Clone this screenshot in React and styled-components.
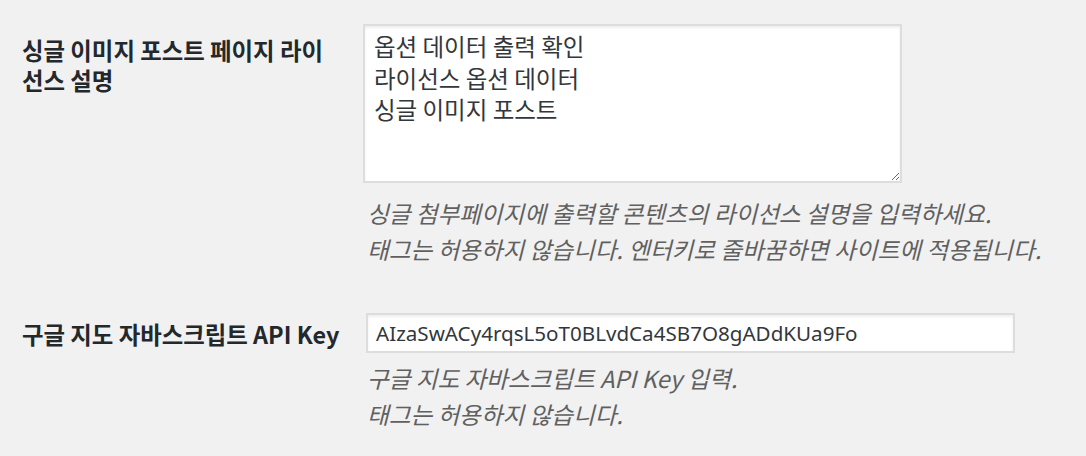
import React from "react";
import styled, { createGlobalStyle } from "styled-components";

const Global = createGlobalStyle`
  html, body { margin: 0; padding: 0; background: #f1f1f1; }
  body { font-family: "Noto Sans CJK KR", "Noto Sans", sans-serif; color: #23282d; }
  * { box-sizing: border-box; }
`;

const Page = styled.div`
  width: 1086px;
  height: 456px;
  padding: 24px 0 0 22px;
  background: #f1f1f1;
  overflow: hidden;
`;

const Row = styled.div`
  display: grid;
  grid-template-columns: 341px 1fr;
  margin-top: ${(p) => p.$gap || 0}px;
`;

const Label = styled.label`
  display: block;
  padding: ${(p) => p.$top}px 29px 0 0;
  font-family: "Noto Sans CJK KR", "Noto Sans", sans-serif;
  font-size: 23.4px;
  line-height: 30px;
  font-weight: 700;
  color: #23282d;
  white-space: ${(p) => (p.$nowrap ? "nowrap" : "normal")};
`;

const Field = styled.div`
  display: flex;
  flex-direction: column;
  align-items: flex-start;
`;

const TextArea = styled.textarea`
  display: block;
  width: 539px;
  height: 159px;
  margin: 0;
  padding: 5px 9px;
  border: 2px solid #dddddd;
  border-radius: 0;
  background: #fff;
  box-shadow: inset 0 2px 3px rgba(0, 0, 0, 0.07);
  font-family: "Noto Sans CJK KR", "Noto Sans", sans-serif;
  font-size: 23.5px;
  line-height: 31.5px;
  color: #32373c;
  outline: none;
`;

const TextInput = styled.input`
  display: block;
  width: 649px;
  height: 40px;
  margin: 0 0 0 3px;
  padding: 0 8px;
  border: 2px solid #dddddd;
  border-radius: 0;
  background: #fff;
  box-shadow: inset 0 2px 3px rgba(0, 0, 0, 0.07);
  font-family: "Noto Sans", "Noto Sans CJK KR", sans-serif;
  font-size: 20.6px;
  color: #32373c;
  outline: none;
`;

const Description = styled.p`
  margin: ${(p) => p.$top}px 0 0 0;
  padding-left: 4px;
  font-family: "Noto Sans CJK KR", "Noto Sans", sans-serif;
  font-size: 23.6px;
  line-height: 36px;
  font-style: italic;
  color: #606060;
`;

export default function App() {
  return (
    <>
      <Global />
      <Page>
        <Row>
          <Label $top={11}>싱글 이미지 포스트 페이지 라이선스 설명</Label>
          <Field>
            <TextArea
              defaultValue={"옵션 데이터 출력 확인\n라이선스 옵션 데이터\n싱글 이미지 포스트"}
            />
            <Description $top={12}>
              싱글 첨부페이지에 출력할 콘텐츠의 라이선스 설명을 입력하세요.
              <br />
              태그는 허용하지 않습니다. 엔터키로 줄바꿈하면 사이트에 적용됩니다.
            </Description>
          </Field>
        </Row>
        <Row $gap={46}>
          <Label $top={6} $nowrap>
            구글 지도 자바스크립트 API Key
          </Label>
          <Field>
            <TextInput
              type="text"
              defaultValue="AIzaSwACy4rqsL5oT0BLvdCa4SB7O8gADdKUa9Fo"
            />
            <Description $top={7}>
              구글 지도 자바스크립트 API Key 입력.
              <br />
              태그는 허용하지 않습니다.
            </Description>
          </Field>
        </Row>
      </Page>
    </>
  );
}
